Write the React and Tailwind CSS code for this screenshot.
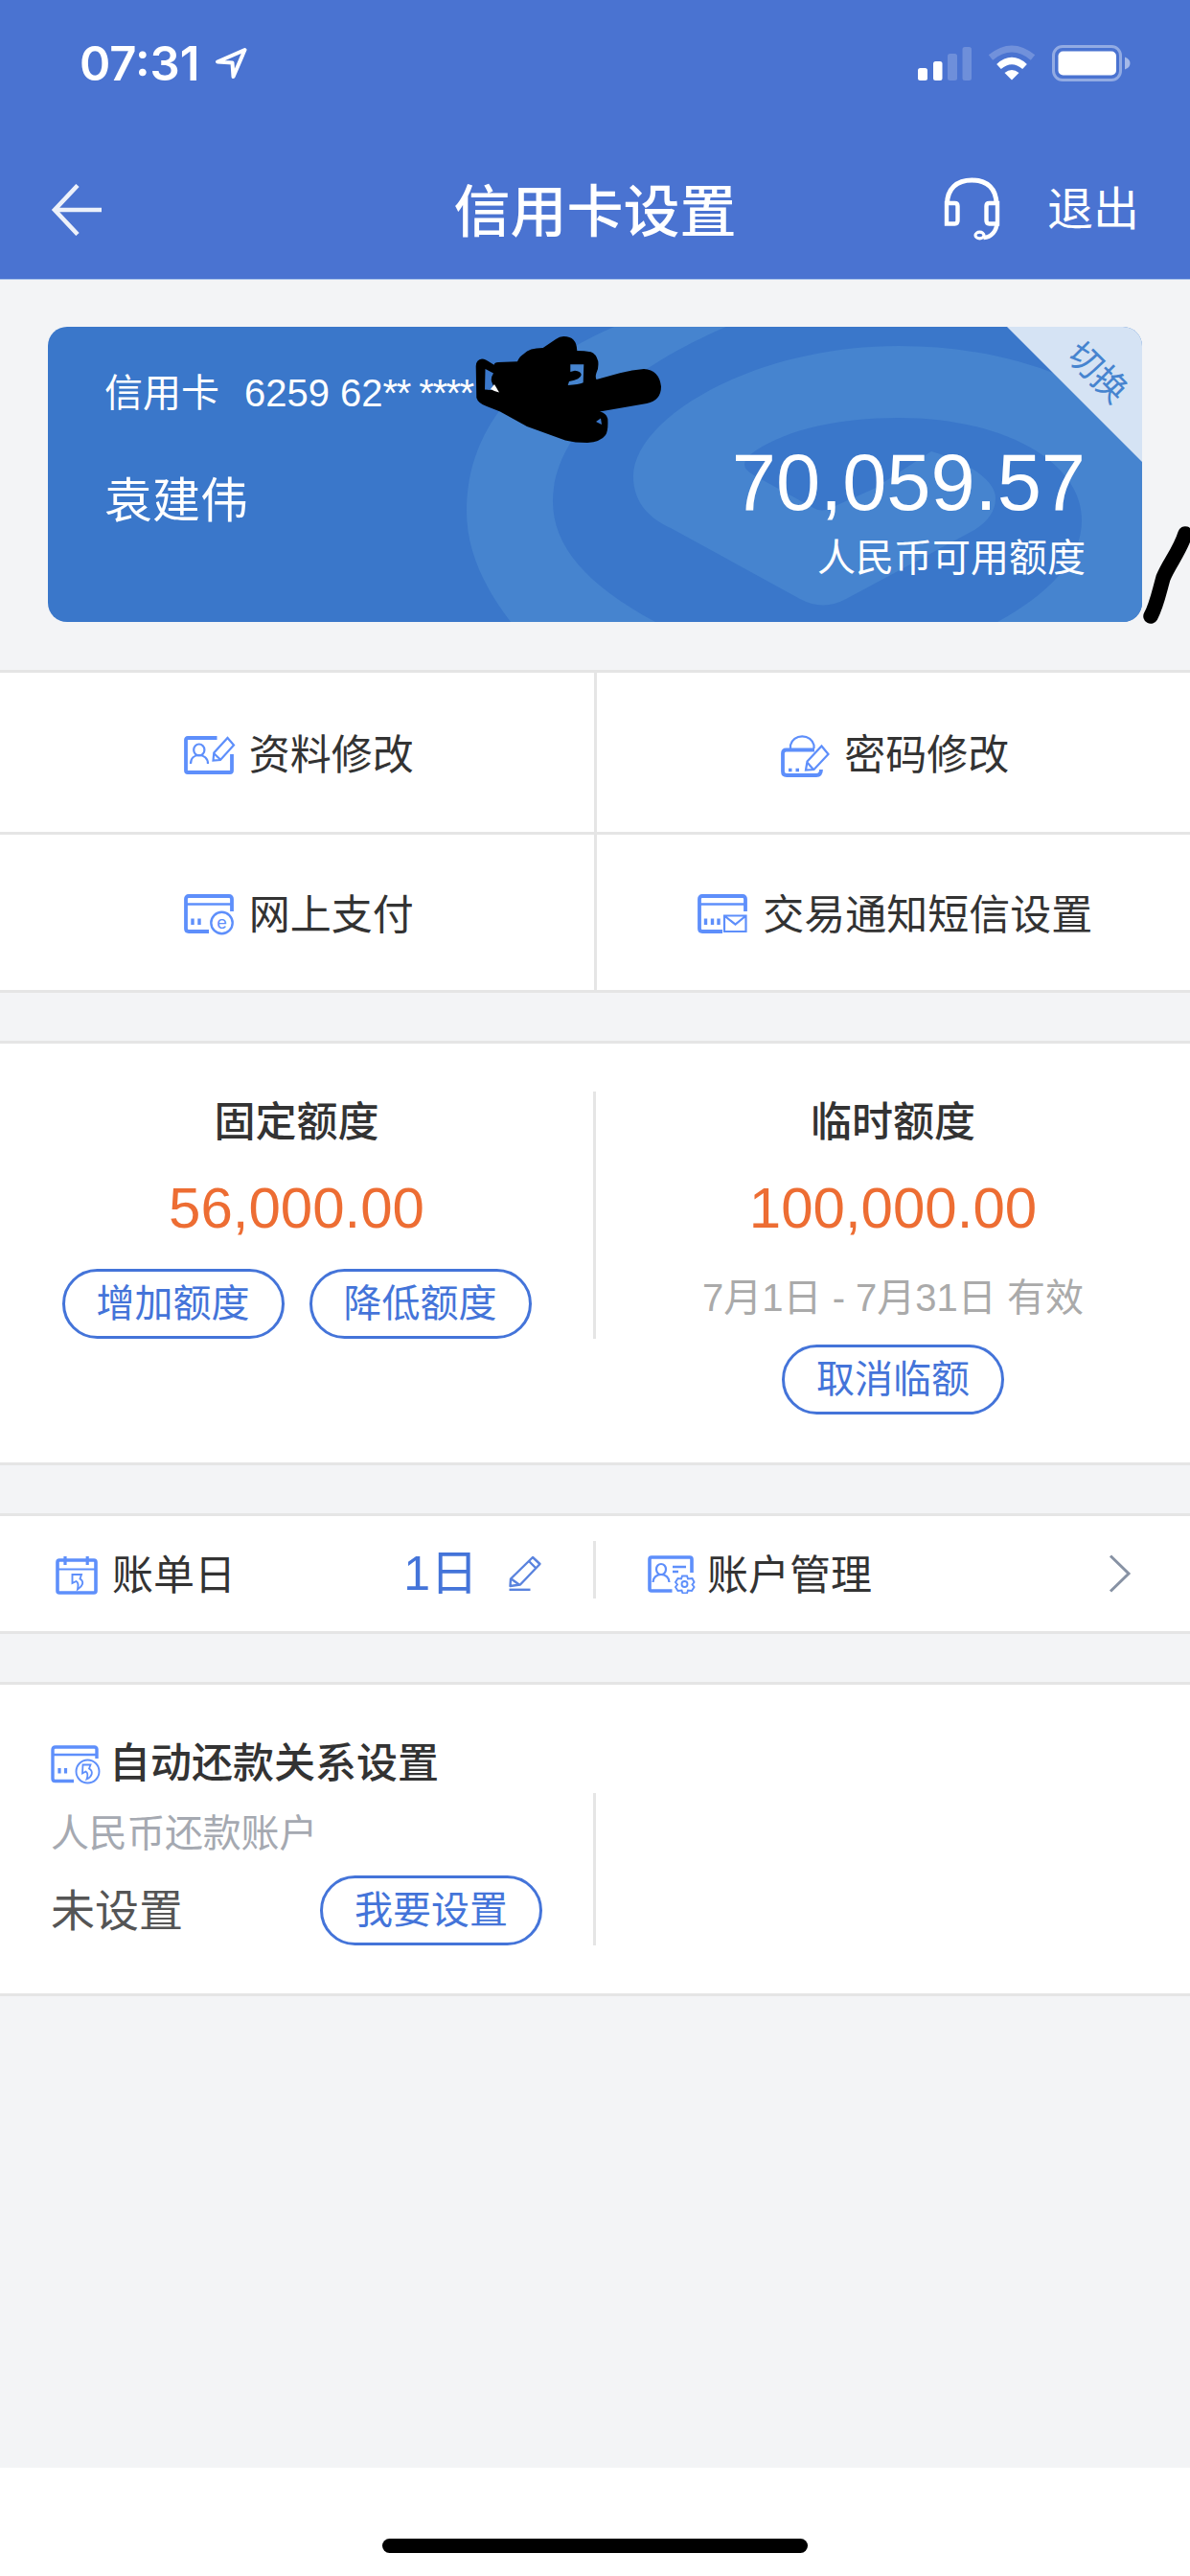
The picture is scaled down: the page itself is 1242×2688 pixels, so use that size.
import React from 'react';

const CardOutline = ({ dots }) => (
  <>
    <path d="M50 18V5q0-3-3-3H5Q2 2 2 5v31q0 3 3 3h21" strokeWidth="3.8" />
    <path d="M3 10.5h46" strokeWidth="2.6" />
    {dots.map((x) => (
      <path key={x} d={`M${x} 25.5v6.5`} strokeWidth="3.4" />
    ))}
  </>
);

const ProfileIcon = () => (
  <svg width="54" height="44" viewBox="0 0 54 44" fill="none" stroke="#5e8ffb">
    <path d="M34.5 4H4Q2 4 2 6v32q0 2 2 2h44q2 0 2-2V21" strokeWidth="3.8" />
    <ellipse cx="15.8" cy="16.5" rx="5.6" ry="6" strokeWidth="2.200" />
    <path d="M7 31c0-6 4-9 8.800-9s9.200 3 9.200 9" strokeWidth="2.200" />
    <path d="M30.500 27.500l.8-8L45.500 4l6.500 7.500-14 15.500zM31 20l7 6.500" strokeWidth="2.200" />
  </svg>
);

const LockIcon = () => (
  <svg width="52" height="48" viewBox="0 0 52 48" fill="none" stroke="#5e8ffb">
    <path d="M10 17v-3.500a12.500 11.500 0 0 1 24.500 0V17" strokeWidth="2.200" />
    <path d="M35 18.500H5.500q-3.500 0-3.500 3.500v19q0 4 4 4h31q5 0 5-6" strokeWidth="3.8" />
    <path d="M8 39.500h3.500M15.500 39.500h3.500" strokeWidth="3.400" />
    <path d="M26 39.500l1.500-9L42.500 14.500l7 8.500-15 16zM27 31l7 8" strokeWidth="2.200" />
  </svg>
);

const OnlinePayIcon = () => (
  <svg width="54" height="44" viewBox="0 0 54 44" fill="none" stroke="#5e8ffb">
    <CardOutline dots={[9, 16]} />
    <circle cx="39.500" cy="30" r="11.200" strokeWidth="2.400" />
    <text
      x="39.500"
      y="35.500"
      textAnchor="middle"
      fill="#5e8ffb"
      stroke="none"
      className="font-['Liberation_Sans'] text-[19px]"
    >
      e
    </text>
  </svg>
);

const SmsIcon = () => (
  <svg width="54" height="44" viewBox="0 0 54 44" fill="none" stroke="#5e8ffb">
    <CardOutline dots={[8.500, 15.500, 22]} />
    <path d="M28 22.500h22.500V39H28zM28.500 23l11 8.500L50 23" strokeWidth="2.200" />
  </svg>
);

const CalendarIcon = () => (
  <svg className="mt-[4px]" width="45" height="42" viewBox="0 0 45 42" fill="none" stroke="#5e8ffb">
    <rect x="2" y="5" width="40" height="34" rx="2" strokeWidth="3.600" />
    <path d="M3 14.500h38" strokeWidth="2.200" />
    <path d="M10 1v9M33.200 1v9" strokeWidth="3.200" />
    <path d="M17.500 20h9.500l-1.500 4.500c5 3 2.500 8-2.500 11 1-4.500.5-7.500-1.500-8.500l-4 2z" strokeWidth="1.900" />
  </svg>
);

const AccountIcon = () => (
  <svg className="mt-[2px]" width="50" height="40" viewBox="0 0 50 40" fill="none" stroke="#5e8ffb">
    <path d="M46 18V4q0-2-2-2H4Q2 2 2 4v31q0 2 2 2h21.500" strokeWidth="3.600" />
    <ellipse cx="14" cy="14.500" rx="5" ry="5.500" strokeWidth="2.200" />
    <path d="M5.500 28c0-5 4-8 8.500-8s8.500 3 8.500 8" strokeWidth="2.200" />
    <path d="M26 12h14M26 17h6" strokeWidth="2.600" />
    <path d="M36 21.500h5l1 3 4.500-.5 2 4-2 2.500 2 2.500-2.500 4-4-.5-1 3h-4.500l-1-3-4 .5-2.500-4 2-2.500-2-2.500 2.500-4 3.500.5z" strokeWidth="1.900" />
    <circle cx="38.500" cy="30" r="3" strokeWidth="1.900" />
  </svg>
);

const AutoPayIcon = () => (
  <svg className="mt-[4px]" width="53" height="42" viewBox="0 0 53 42" fill="none" stroke="#5e8ffb">
    <path d="M48 14V4.500Q48 2 45.500 2H5Q2 2 2 5v30q0 2.500 2.500 2.500H24" strokeWidth="3.400" />
    <path d="M3 10h44" strokeWidth="2.400" />
    <path d="M9 24v5.500M15.500 24v5.500" strokeWidth="3.200" />
    <circle cx="38.500" cy="27.500" r="12" strokeWidth="1.900" />
    <path d="M33.500 20.500h8l-1.500 4c5 3 3 8.500-2.500 11 1.500-4 .5-7-1-8l-3.500 2z" strokeWidth="1.800" />
  </svg>
);

const PencilIcon = () => (
  <svg width="36" height="38" viewBox="0 0 36 38" fill="none" stroke="#5a83de" strokeWidth="2.400">
    <path d="M2.500 32l.5-7.500L26 2l7.500 7-20.500 21.500zM22 6l7.500 7.500M3.500 24.500l9 6.500" strokeLinejoin="round" />
    <path d="M1.500 35.800h22" />
  </svg>
);

const HeadsetIcon = () => (
  <svg width="60" height="68" viewBox="0 0 60 68" fill="none" stroke="#fff">
    <path d="M3.500 28c0-16 10-25 26-25s25.500 9 25.500 25" strokeWidth="5" />
    <path d="M3 27h8.500q3 0 3 3v15q0 3.500-3 3.500H3z" strokeWidth="4.400" />
    <path d="M56 27h-8.500q-3 0-3 3v15q0 3.500 3 3.500H56z" strokeWidth="4.400" />
    <path d="M55.500 47c0 9-6 15.500-14 16" strokeWidth="4.400" />
    <ellipse cx="37.500" cy="60.500" rx="4.500" ry="3.300" strokeWidth="3.200" />
  </svg>
);

const StatusBar = () => (
  <div className="flex items-start justify-between h-[134px] pl-[83px] pr-[62px] pt-[46px]">
    <div className="flex items-start">
      <span className="w-[140px] text-[49px] leading-[42px] font-semibold font-['Inter']">07:31</span>
      <svg className="mt-[2px]" width="38" height="38" viewBox="0 0 38 38" fill="none" stroke="#fff" strokeWidth="4" strokeLinejoin="round">
        <path d="M32.500 4L4 16.500l15.500 1L20.500 32z" />
      </svg>
    </div>
    <svg width="224" height="40" viewBox="0 0 224 40">
      <g fill="#fff">
        <rect x="2" y="25" width="10" height="13" rx="2.500" />
        <rect x="18" y="18" width="9.500" height="20" rx="2.500" />
        <rect x="33" y="10" width="10" height="28" rx="2.500" opacity=".2" />
        <rect x="48.500" y="3" width="9.500" height="35" rx="2.500" opacity=".2" />
        <path d="M100 37.500l-7.500-7.500q7.500-6 15 0z" />
      </g>
      <g fill="none" stroke="#fff" strokeWidth="7">
        <path d="M86.500 23.500q13.500-12 27 0" />
        <path d="M78 14q22-18 44 0" opacity=".22" />
      </g>
      <rect x="143.500" y="2.500" width="70" height="35" rx="9.500" fill="none" stroke="#fff" strokeWidth="3" opacity=".4" />
      <rect x="148.500" y="7.500" width="60.500" height="25" rx="5" fill="#fff" />
      <path d="M218 13.500q5.500 2 5.500 6.500t-5.500 6.500z" fill="#fff" opacity=".5" />
    </svg>
  </div>
);

const Header = () => (
  <header className="h-[292px] bg-[#4a73d1] border-b border-[#a9c3ea] text-white">
    <StatusBar />
    <div className="grid grid-cols-[420px_1fr_420px] items-center h-[170px]">
      <svg className="ml-[53px]" width="54" height="54" viewBox="0 0 54 54" fill="none" stroke="#fff" strokeWidth="4.600" opacity=".9">
        <path d="M28 1.500L4 27l24 25.500M4 27h49" />
      </svg>
      <h1 className="pt-[6px] text-center text-[59px] leading-[70px] font-medium">信用卡设置</h1>
      <div className="flex items-center justify-end pr-[53px] gap-[48px]">
        <HeadsetIcon />
        <span className="text-[48px] leading-[60px]">退出</span>
      </div>
    </div>
  </header>
);

const CreditCard = () => (
  <div className="relative overflow-hidden mx-[50px] mt-[49px] h-[308px] rounded-[20px] bg-[#3a77ca] text-white">
    <svg className="absolute inset-0" width="1142" height="308" viewBox="50 341 1142 308" fill="#4684cf">
      <path d="M641 341C540 385 487 450 487 533c0 42 18 79 46 116h151C612 610 577 570 577 523c0-73 80-139 181-182z" />
      <path d="M1192 441C1120 385 1030 361 938 361c-153 0-277 76-277 136 0 26 15 43 39 54l135 74q24 13 48 0l134-72q22-14 22-33c0-20-30-38-67-49l-60 39-45 20q-9 5-18 0l-62-34q-21-11 2-26c34-22 86-34 149-34 108 0 191 45 191 107 0 43-37 78-88 106h151z" />
    </svg>
    <svg className="absolute right-0 top-0" width="141" height="141" viewBox="0 0 141 141" fill="#d5e3f4">
      <path d="M0 0h141v141z" />
    </svg>
    <span className="absolute right-[7px] top-[25px] w-[80px] text-center text-[36px] leading-[46px] text-[#4684cf] rotate-45">切换</span>
    <div className="relative flex flex-col h-full pl-[59px] pr-[59px]">
      <div className="flex items-center mt-[45px] h-[48px] text-[40px] leading-[48px]">
        <span className="w-[146px]">信用卡</span>
        <span>6259 62</span>
        <span className="tracking-[-1.500px]">**&nbsp;****</span>
      </div>
      <div className="flex items-start justify-between">
        <span className="mt-[59px] text-[50px] leading-[60px]">袁建伟</span>
        <div className="flex flex-col items-end mt-[23px]">
          <span className="text-[83px] leading-[94px]">70,059.57</span>
          <span className="mt-[7px] text-[40px] leading-[48px]">人民币可用额度</span>
        </div>
      </div>
    </div>
  </div>
);

// pen strokes hiding part of the card number
const PenMarks = () => (
  <svg className="absolute left-0 top-[340px] pointer-events-none" width="1242" height="320" viewBox="0 340 1242 320">
    <path
      fillRule="evenodd"
      d="M503 374.500Q497 375 496.700 382L497.300 415Q499 421 508 424L522 429.500 550 445 590 459.500Q600 462 613 462 627 461 632 454 635 450 634.300 437 633 431 626 429.500L675 421Q690 418 690 403.300 688 386 672 385 660 386 647 389.300L622.500 396Q621 393 622.500 389 625 385 624.300 377 622 369 616.700 367.300 610 366 602.300 366 602 351 588.300 351 584 351 580 354L566.700 363Q552 363 547 369 542 372 540 377.300L520 378Q516 378 515.700 380.700L507 375.500Q505 374.500 503 374.500zM506.500 385L515 389.500Q512 394 513 398L515 403 513 407 506 406.500zM595.300 380.300L609.300 380.300 608.700 399.300Q604 401.500 592.700 402L594 398Q606 396 606.700 391 606 387 600 386.700L595.300 388zM622 440L627 436.500 628 443z"
    />
    <path d="M512 406l4-5 5 8.500-5-1.500z" fill="#fff" />
    <path d="M1237 557c-6 19-17 31-23 46-5 18-7 29-13 40" fill="none" stroke="#000" strokeWidth="15.500" strokeLinecap="round" />
  </svg>
);

const menuItems = [
  { label: '资料修改', Icon: ProfileIcon },
  { label: '密码修改', Icon: LockIcon },
  { label: '网上支付', Icon: OnlinePayIcon },
  { label: '交易通知短信设置', Icon: SmsIcon },
];

const Menu = () => (
  <section className="grid grid-cols-2 grid-rows-[166px_162px] gap-[3px] mt-[50px] border-y-[3px] border-[#e5e5e5] bg-[#e5e5e5]">
    {menuItems.map(({ label, Icon }) => (
      <div key={label} className="flex items-center justify-center gap-[14px] pl-[4px] pt-[5px] bg-white">
        <Icon />
        <span className="text-[43px] leading-[52px]">{label}</span>
      </div>
    ))}
  </section>
);

const PillButton = ({ children }) => (
  <button className="w-[232px] h-[73px] pb-[1px] rounded-full border-[3px] border-[#4474d9] text-[40px] leading-[66px] text-[#4474d9]">
    {children}
  </button>
);

const Limits = () => (
  <section className="flex mt-[50px] h-[443px] border-y-[3px] border-[#e5e5e5] bg-white">
    <div className="flex flex-col items-center w-[619px] pt-[56px]">
      <h2 className="text-[43px] leading-[52px] font-medium">固定额度</h2>
      <span className="mt-[29px] text-[60px] leading-[70px] text-[#ed6d33]">56,000.00</span>
      <div className="flex gap-[26px] mt-[28px]">
        <PillButton>增加额度</PillButton>
        <PillButton>降低额度</PillButton>
      </div>
    </div>
    <div className="w-[3px] h-[258px] mt-[50px] bg-[#e5e5e5]" />
    <div className="flex flex-col items-center flex-1 pt-[56px]">
      <h2 className="text-[43px] leading-[52px] font-medium">临时额度</h2>
      <span className="mt-[29px] text-[60px] leading-[70px] text-[#ed6d33]">100,000.00</span>
      <span className="mt-[34px] text-[40px] leading-[48px] text-[#aaaaaa]">7月1日 - 7月31日 有效</span>
      <div className="mt-[25px]">
        <PillButton>取消临额</PillButton>
      </div>
    </div>
  </section>
);

const BillRow = () => (
  <section className="flex items-center mt-[50px] h-[126px] border-y-[3px] border-[#e5e5e5] bg-white">
    <div className="flex items-center w-[619px] pl-[58px] pr-[53px]">
      <CalendarIcon />
      <span className="ml-[14px] pt-[3px] text-[43px] leading-[52px]">账单日</span>
      <span className="ml-auto mr-[31px] text-[50px] leading-[60px] text-[#4474d9]">1日</span>
      <PencilIcon />
    </div>
    <div className="w-[3px] h-[60px] mb-[8px] bg-[#e5e5e5]" />
    <div className="flex items-center flex-1 pl-[54px] pr-[61px]">
      <AccountIcon />
      <span className="ml-[12px] pt-[3px] text-[43px] leading-[52px]">账户管理</span>
      <svg className="ml-auto" width="24" height="40" viewBox="0 0 24 40" fill="none" stroke="#8792a4" strokeWidth="3">
        <path d="M2 1.500L21 20 2 38.500" />
      </svg>
    </div>
  </section>
);

const AutoRepay = () => (
  <section className="flex mt-[50px] h-[328px] border-y-[3px] border-[#e5e5e5] bg-white">
    <div className="flex flex-col w-[619px] pl-[53px] pr-[53px] pt-[56px]">
      <div className="flex items-center">
        <AutoPayIcon />
        <h2 className="ml-[8px] text-[43px] leading-[52px] font-medium">自动还款关系设置</h2>
      </div>
      <span className="mt-[23px] text-[40px] leading-[48px] tracking-[-0.300px] text-[#a5a9b1]">人民币还款账户</span>
      <div className="flex items-center justify-between mt-[20px]">
        <span className="text-[46px] leading-[56px] text-[#555555]">未设置</span>
        <PillButton>我要设置</PillButton>
      </div>
    </div>
    <div className="w-[3px] h-[159px] mt-[113px] bg-[#e5e5e5]" />
  </section>
);

const App = () => {
  return (
    <div className="relative flex flex-col w-[1242px] h-[2688px] bg-[#f3f4f6] text-[#333333] font-['Liberation_Sans','Noto_Sans_CJK_SC',sans-serif]">
      <Header />
      <CreditCard />
      <Menu />
      <Limits />
      <BillRow />
      <AutoRepay />
      <div className="flex items-end justify-center mt-auto h-[113px] pb-[24px] bg-white">
        <div className="w-[444px] h-[15px] rounded-full bg-black" />
      </div>
      <PenMarks />
    </div>
  );
};

export default App;
